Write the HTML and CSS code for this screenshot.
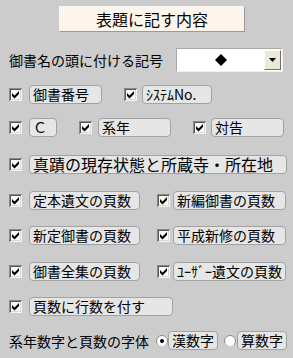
FILE: index.html
```html
<!DOCTYPE html>
<html lang="ja">
<head>
<meta charset="utf-8">
<link rel="stylesheet" href="styles.css">
</head>
<body>
<div class="panel">
  <div class="title-row"><div class="title">表題に記す内容</div></div>

  <div class="symbol-row">
    <span class="symbol-label">御書名の頭に付ける記号</span>
    <div class="select">
      <span class="select-value"><svg width="12" height="12" viewBox="0 0 12 12"><polygon points="6,0 12,6 6,12 0,6" fill="#000"/></svg></span>
      <span class="select-btn"><svg width="7" height="4" viewBox="0 0 7 4"><polygon points="0,0 7,0 3.5,4" fill="#000"/></svg></span>
    </div>
  </div>

  <div class="row r1">
    <span class="cb m9"><svg width="13" height="13" viewBox="0 0 13 13"><rect x="0" y="0" width="13" height="13" fill="#f4f4f4"/><path d="M0 0H13V1H1V13H0Z" fill="#8a8a8a"/><rect x="1" y="1" width="11" height="11" fill="#d8d8d8"/><path d="M1 1H12V2H2V12H1Z" fill="#555"/><rect x="2" y="2" width="9" height="9" fill="#fdfbf0"/><path d="M3 5L5.5 7.5L10 3V6L5.5 10.5L3 8Z" fill="#000"/></svg></span>
    <span class="lbl m7 w73">御書番号</span>
    <span class="cb m22"><svg width="13" height="13" viewBox="0 0 13 13"><rect x="0" y="0" width="13" height="13" fill="#f4f4f4"/><path d="M0 0H13V1H1V13H0Z" fill="#8a8a8a"/><rect x="1" y="1" width="11" height="11" fill="#d8d8d8"/><path d="M1 1H12V2H2V12H1Z" fill="#555"/><rect x="2" y="2" width="9" height="9" fill="#fdfbf0"/><path d="M3 5L5.5 7.5L10 3V6L5.5 10.5L3 8Z" fill="#000"/></svg></span>
    <span class="lbl m5 w70">ｼｽﾃﾑNo.</span>
  </div>

  <div class="row r2">
    <span class="cb m9"><svg width="13" height="13" viewBox="0 0 13 13"><rect x="0" y="0" width="13" height="13" fill="#f4f4f4"/><path d="M0 0H13V1H1V13H0Z" fill="#8a8a8a"/><rect x="1" y="1" width="11" height="11" fill="#d8d8d8"/><path d="M1 1H12V2H2V12H1Z" fill="#555"/><rect x="2" y="2" width="9" height="9" fill="#fdfbf0"/><path d="M3 5L5.5 7.5L10 3V6L5.5 10.5L3 8Z" fill="#000"/></svg></span>
    <span class="lbl m7 w28">Ｃ</span>
    <span class="cb m22"><svg width="13" height="13" viewBox="0 0 13 13"><rect x="0" y="0" width="13" height="13" fill="#f4f4f4"/><path d="M0 0H13V1H1V13H0Z" fill="#8a8a8a"/><rect x="1" y="1" width="11" height="11" fill="#d8d8d8"/><path d="M1 1H12V2H2V12H1Z" fill="#555"/><rect x="2" y="2" width="9" height="9" fill="#fdfbf0"/><path d="M3 5L5.5 7.5L10 3V6L5.5 10.5L3 8Z" fill="#000"/></svg></span>
    <span class="lbl m6 w73">系年</span>
    <span class="cb m22"><svg width="13" height="13" viewBox="0 0 13 13"><rect x="0" y="0" width="13" height="13" fill="#f4f4f4"/><path d="M0 0H13V1H1V13H0Z" fill="#8a8a8a"/><rect x="1" y="1" width="11" height="11" fill="#d8d8d8"/><path d="M1 1H12V2H2V12H1Z" fill="#555"/><rect x="2" y="2" width="9" height="9" fill="#fdfbf0"/><path d="M3 5L5.5 7.5L10 3V6L5.5 10.5L3 8Z" fill="#000"/></svg></span>
    <span class="lbl m5 w73">対告</span>
  </div>

  <div class="row r3">
    <span class="cb m9"><svg width="13" height="13" viewBox="0 0 13 13"><rect x="0" y="0" width="13" height="13" fill="#f4f4f4"/><path d="M0 0H13V1H1V13H0Z" fill="#8a8a8a"/><rect x="1" y="1" width="11" height="11" fill="#d8d8d8"/><path d="M1 1H12V2H2V12H1Z" fill="#555"/><rect x="2" y="2" width="9" height="9" fill="#fdfbf0"/><path d="M3 5L5.5 7.5L10 3V6L5.5 10.5L3 8Z" fill="#000"/></svg></span>
    <span class="lbl lbl-big m7 w258">真蹟の現存状態と所蔵寺・所在地</span>
  </div>

  <div class="row r4">
    <span class="cb m9"><svg width="13" height="13" viewBox="0 0 13 13"><rect x="0" y="0" width="13" height="13" fill="#f4f4f4"/><path d="M0 0H13V1H1V13H0Z" fill="#8a8a8a"/><rect x="1" y="1" width="11" height="11" fill="#d8d8d8"/><path d="M1 1H12V2H2V12H1Z" fill="#555"/><rect x="2" y="2" width="9" height="9" fill="#fdfbf0"/><path d="M3 5L5.5 7.5L10 3V6L5.5 10.5L3 8Z" fill="#000"/></svg></span>
    <span class="lbl m7 w111">定本遺文の頁数</span>
    <span class="cb m17"><svg width="13" height="13" viewBox="0 0 13 13"><rect x="0" y="0" width="13" height="13" fill="#f4f4f4"/><path d="M0 0H13V1H1V13H0Z" fill="#8a8a8a"/><rect x="1" y="1" width="11" height="11" fill="#d8d8d8"/><path d="M1 1H12V2H2V12H1Z" fill="#555"/><rect x="2" y="2" width="9" height="9" fill="#fdfbf0"/><path d="M3 5L5.5 7.5L10 3V6L5.5 10.5L3 8Z" fill="#000"/></svg></span>
    <span class="lbl m3 w113">新編御書の頁数</span>
  </div>

  <div class="row r5">
    <span class="cb m9"><svg width="13" height="13" viewBox="0 0 13 13"><rect x="0" y="0" width="13" height="13" fill="#f4f4f4"/><path d="M0 0H13V1H1V13H0Z" fill="#8a8a8a"/><rect x="1" y="1" width="11" height="11" fill="#d8d8d8"/><path d="M1 1H12V2H2V12H1Z" fill="#555"/><rect x="2" y="2" width="9" height="9" fill="#fdfbf0"/><path d="M3 5L5.5 7.5L10 3V6L5.5 10.5L3 8Z" fill="#000"/></svg></span>
    <span class="lbl m7 w111">新定御書の頁数</span>
    <span class="cb m17"><svg width="13" height="13" viewBox="0 0 13 13"><rect x="0" y="0" width="13" height="13" fill="#f4f4f4"/><path d="M0 0H13V1H1V13H0Z" fill="#8a8a8a"/><rect x="1" y="1" width="11" height="11" fill="#d8d8d8"/><path d="M1 1H12V2H2V12H1Z" fill="#555"/><rect x="2" y="2" width="9" height="9" fill="#fdfbf0"/><path d="M3 5L5.5 7.5L10 3V6L5.5 10.5L3 8Z" fill="#000"/></svg></span>
    <span class="lbl m3 w113">平成新修の頁数</span>
  </div>

  <div class="row r6">
    <span class="cb m9"><svg width="13" height="13" viewBox="0 0 13 13"><rect x="0" y="0" width="13" height="13" fill="#f4f4f4"/><path d="M0 0H13V1H1V13H0Z" fill="#8a8a8a"/><rect x="1" y="1" width="11" height="11" fill="#d8d8d8"/><path d="M1 1H12V2H2V12H1Z" fill="#555"/><rect x="2" y="2" width="9" height="9" fill="#fdfbf0"/><path d="M3 5L5.5 7.5L10 3V6L5.5 10.5L3 8Z" fill="#000"/></svg></span>
    <span class="lbl m7 w111">御書全集の頁数</span>
    <span class="cb m17"><svg width="13" height="13" viewBox="0 0 13 13"><rect x="0" y="0" width="13" height="13" fill="#f4f4f4"/><path d="M0 0H13V1H1V13H0Z" fill="#8a8a8a"/><rect x="1" y="1" width="11" height="11" fill="#d8d8d8"/><path d="M1 1H12V2H2V12H1Z" fill="#555"/><rect x="2" y="2" width="9" height="9" fill="#fdfbf0"/><path d="M3 5L5.5 7.5L10 3V6L5.5 10.5L3 8Z" fill="#000"/></svg></span>
    <span class="lbl m3 w113">ﾕｰｻﾞｰ遺文の頁数</span>
  </div>

  <div class="row r7">
    <span class="cb m9"><svg width="13" height="13" viewBox="0 0 13 13"><rect x="0" y="0" width="13" height="13" fill="#f4f4f4"/><path d="M0 0H13V1H1V13H0Z" fill="#8a8a8a"/><rect x="1" y="1" width="11" height="11" fill="#d8d8d8"/><path d="M1 1H12V2H2V12H1Z" fill="#555"/><rect x="2" y="2" width="9" height="9" fill="#fdfbf0"/><path d="M3 5L5.5 7.5L10 3V6L5.5 10.5L3 8Z" fill="#000"/></svg></span>
    <span class="lbl m7 w144">頁数に行数を付す</span>
  </div>

  <div class="row r8">
    <span class="font-label">系年数字と頁数の字体</span>
    <span class="radio"><svg width="12" height="12" viewBox="0 0 12 12"><circle cx="6" cy="6" r="5.5" fill="#fff" stroke="#8a8a8a"/><path d="M1.5 8.5A5 5 0 0 0 10 9.5" fill="none" stroke="#f4f4f4"/><circle cx="6" cy="6" r="2" fill="#000"/></svg></span>
    <span class="lbl m0 w50">漢数字</span>
    <span class="radio m6"><svg width="12" height="12" viewBox="0 0 12 12"><circle cx="6" cy="6" r="5.5" fill="#fff" stroke="#8a8a8a"/><path d="M1.5 8.5A5 5 0 0 0 10 9.5" fill="none" stroke="#f4f4f4"/></svg></span>
    <span class="lbl m1 w50">算数字</span>
  </div>
</div>
</body>
</html>
```

FILE: styles.css
```css
html, body {
  margin: 0;
  padding: 0;
  background: #cccccc;
}
.panel {
  width: 293px;
  height: 358px;
  font-family: "Noto Sans CJK JP", "Liberation Sans", sans-serif;
  font-size: 14px;
  color: #000;
  overflow: hidden;
}
.title-row {
  padding-top: 6px;
  padding-left: 59px;
}
.title {
  width: 186px;
  height: 26px;
  box-sizing: border-box;
  background: #fdf5ec;
  border: 1px solid;
  border-color: #f6f6f6 #9a9a9a #9a9a9a #f6f6f6;
  font-size: 16px;
  line-height: 24px;
  text-align: center;
}
.symbol-row {
  display: flex;
  align-items: center;
  margin-top: 16px;
  height: 24px;
}
.symbol-label {
  margin-left: 9px;
  width: 167px;
  line-height: 16px;
  white-space: nowrap;
}
.select {
  width: 107px;
  height: 24px;
  box-sizing: border-box;
  background: #fff;
  border: 1px solid;
  border-color: #a8a8a8 #f0f0f0 #f0f0f0 #a8a8a8;
  display: flex;
  align-items: center;
  padding: 1px 1px 1px 0;
}
.select-value {
  flex: 1;
  display: flex;
  justify-content: center;
  align-items: center;
}
.select-value svg { display: block; }
.select-btn {
  width: 17px;
  height: 20px;
  box-sizing: border-box;
  background: #ece9d8;
  border: 1px solid;
  border-color: #fbfbf6 #716f64 #716f64 #fbfbf6;
  display: flex;
  justify-content: center;
  align-items: center;
}
.select-btn svg { display: block; }
.row {
  display: flex;
  align-items: center;
  height: 19px;
}
.r1 { margin-top: 13px; }
.r2 { margin-top: 14px; }
.r3 { margin-top: 18px; }
.r4 { margin-top: 17px; }
.r5 { margin-top: 16px; }
.r6 { margin-top: 17px; }
.r7 { margin-top: 16px; }
.r8 { margin-top: 15px; }
.cb, .radio {
  display: block;
  flex: none;
  line-height: 0;
}
.cb svg, .radio svg { display: block; }
.lbl {
  flex: none;
  display: block;
  height: 19px;
  box-sizing: border-box;
  border: 1px solid #a2a2a2;
  border-radius: 4px;
  background: #e6e6e6;
  padding-left: 3px;
  line-height: 17px;
  white-space: nowrap;
}
.lbl-big {
  font-size: 16px;
  line-height: 17px;
}
.font-label {
  flex: none;
  margin-left: 9px;
  width: 147px;
  line-height: 16px;
  white-space: nowrap;
}
.m0 { margin-left: 0; }
.m1 { margin-left: 1px; }
.m3 { margin-left: 3px; }
.m5 { margin-left: 5px; }
.m6 { margin-left: 6px; }
.m7 { margin-left: 7px; }
.m9 { margin-left: 9px; }
.m17 { margin-left: 17px; }
.m22 { margin-left: 22px; }
.w28 { width: 28px; }
.w50 { width: 50px; }
.w70 { width: 70px; }
.w73 { width: 73px; }
.w111 { width: 111px; }
.w113 { width: 113px; }
.w144 { width: 144px; }
.w258 { width: 258px; }
```
